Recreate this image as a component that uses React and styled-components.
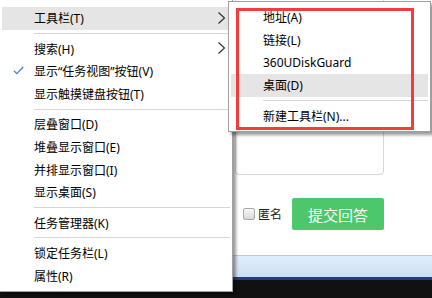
import styled, { createGlobalStyle } from "styled-components";

const GlobalStyle = createGlobalStyle`
    html, body {
        margin: 0;
        padding: 0;
        background: #ffffff;
    }
    body {
        font-family: "Noto Sans", "Noto Sans CJK SC", sans-serif;
        font-size: 12px;
        color: #000;
    }
`

const Page = styled.div`
    position: relative;
    width: 432px;
    height: 298px;
    overflow: hidden;
    display: flex;
    flex-direction: column;
    background: #fff;
`

const Content = styled.div`
    flex: 1;
    padding-left: 235px;
    display: flex;
    flex-direction: column;
`

const AnswerBox = styled.div`
    width: 149px;
    height: 175px;
    box-sizing: border-box;
    border: 1px solid #d3d9e0;
    border-top: none;
    border-radius: 0 0 4px 4px;
    background: #fff;
`

const ActionRow = styled.div`
    margin-top: 23px;
    height: 32px;
    padding-left: 8px;
    display: flex;
    align-items: center;
`

const Checkbox = styled.span`
    width: 12px;
    height: 12px;
    box-sizing: border-box;
    border: 1px solid #a8a8a8;
    border-radius: 2px;
    background: linear-gradient(#f6f6f6, #dadada);
`

const CheckLabel = styled.span`
    margin-left: 3px;
    font-size: 12px;
    color: #222;
`

const SubmitButton = styled.button`
    margin-left: 10px;
    width: 92px;
    height: 32px;
    border: none;
    border-radius: 2px;
    background: #4cc76c;
    color: #fff;
    font-family: "Noto Sans CJK SC", sans-serif;
    font-size: 15px;
    padding: 0;
`

const StatusBar = styled.div`
    height: 21px;
    border-top: 1px solid #bfcad8;
    background: linear-gradient(#e1edfb, #cddff4);
`

const Taskbar = styled.div`
    height: 18px;
    border-top: 3px solid #20407a;
    background: #111;
`

const Menu = styled.div`
    position: absolute;
    left: ${p => p.$left}px;
    top: ${p => p.$top}px;
    width: ${p => p.$width}px;
    box-sizing: border-box;
    background: #fff;
    padding: ${p => p.$padTop}px 2px 4px 2px;
    border: 1px solid #a0a0a0;
    border-top: ${p => (p.$noTop ? "none" : "1px solid #a0a0a0")};
    border-left: ${p => (p.$noLeft ? "none" : "1px solid #a0a0a0")};
    box-shadow: 3px 3px 3px rgba(0, 0, 0, 0.4);
`

const Item = styled.div`
    position: relative;
    height: 22.67px;
    display: flex;
    align-items: center;
    padding-left: ${p => p.$indent}px;
    background: ${p => (p.$hover ? "#e5e5e5" : "transparent")};
    white-space: nowrap;
`

const Separator = styled.div`
    height: 7.67px;
    margin-left: ${p => p.$indent}px;
    display: flex;
    align-items: center;

    &::after {
        content: "";
        flex: 1;
        height: 1px;
        background: #d6d6d6;
    }
`

const Check = styled.svg`
    position: absolute;
    left: 11px;
    top: 6px;
`

const Arrow = styled.svg`
    position: absolute;
    right: 4px;
    top: 5px;
`

const Highlight = styled.div`
    position: absolute;
    left: 236px;
    top: 8px;
    width: 178px;
    height: 122px;
    box-sizing: border-box;
    border: 3px solid #f43c3c;
    pointer-events: none;
`

function Chevron() {
    return (
        <Arrow width="9" height="12" viewBox="0 0 9 12">
            <polyline points="1.5,0.5 7.5,6 1.5,11.5" fill="none" stroke="#2b2b2b" strokeWidth="1.1" />
        </Arrow>
    )
}

const mainItems = [
    { label: "工具栏(T)", arrow: true, hover: true },
    "sep",
    { label: "搜索(H)", arrow: true },
    { label: "显示“任务视图”按钮(V)", checked: true },
    { label: "显示触摸键盘按钮(T)" },
    "sep",
    { label: "层叠窗口(D)" },
    { label: "堆叠显示窗口(E)" },
    { label: "并排显示窗口(I)" },
    { label: "显示桌面(S)" },
    "sep",
    { label: "任务管理器(K)" },
    "sep",
    { label: "锁定任务栏(L)" },
    { label: "属性(R)" },
]

const subItems = [
    { label: "地址(A)" },
    { label: "链接(L)" },
    { label: "360UDiskGuard" },
    { label: "桌面(D)", hover: true },
    "sep",
    { label: "新建工具栏(N)..." },
]

function MenuList({ items, indent }) {
    return items.map((it, i) =>
        it === "sep" ? (
            <Separator key={i} $indent={indent} />
        ) : (
            <Item key={i} $indent={indent} $hover={it.hover}>
                {it.checked && (
                    <Check width="11" height="9" viewBox="0 0 11 9">
                        <polyline points="0.8,4.6 3.8,7.6 10.2,1" fill="none" stroke="#3d7cc9" strokeWidth="1.2" />
                    </Check>
                )}
                {it.label}
                {it.arrow && <Chevron />}
            </Item>
        )
    )
}

export default function App() {
    return (
        <>
            <GlobalStyle />
            <Page>
                <Content>
                    <AnswerBox />
                    <ActionRow>
                        <Checkbox />
                        <CheckLabel>匿名</CheckLabel>
                        <SubmitButton>提交回答</SubmitButton>
                    </ActionRow>
                </Content>
                <StatusBar />
                <Taskbar />

                <Menu $left={0} $top={0} $width={233} $padTop={7} $noTop $noLeft>
                    <MenuList items={mainItems} indent={32} />
                </Menu>
                <Menu $left={228} $top={1} $width={203} $padTop={4}>
                    <MenuList items={subItems} indent={32} />
                </Menu>
                <Highlight />
            </Page>
        </>
    )
}
